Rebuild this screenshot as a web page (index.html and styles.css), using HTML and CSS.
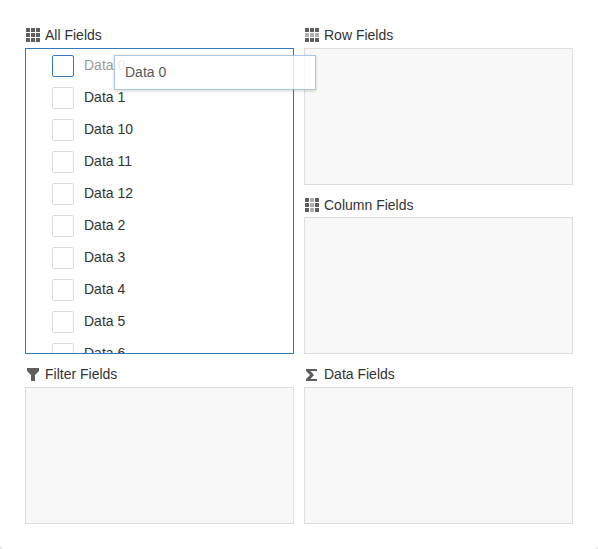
FILE: index.html
```html
<!DOCTYPE html>
<html lang="en">
<head>
<meta charset="utf-8">
<title>Field Chooser</title>
<link rel="stylesheet" href="styles.css">
</head>
<body>
<svg width="0" height="0" class="defs">
  <defs>
    <path id="col-a" d="M1 1h4v4H1zM1 6h4v4H1zM1 11h4v4H1z"/>
    <path id="col-b" d="M6 1h4v4H6zM6 6h4v4H6zM6 11h4v4H6z"/>
    <path id="col-c" d="M11 1h4v4h-4zM11 6h4v4h-4zM11 11h4v4h-4z"/>
  </defs>
</svg>
<main class="chooser">
  <div class="column">
    <section class="area all">
      <h2 class="title"><svg class="icon" viewBox="0 0 16 16"><use href="#col-a"/><use href="#col-b"/><use href="#col-c"/></svg>All Fields</h2>
      <div class="box list focused">
        <div class="item dragging"><span class="check active"></span><span class="label">Data 0</span></div>
        <div class="item"><span class="check"></span><span class="label">Data 1</span></div>
        <div class="item"><span class="check"></span><span class="label">Data 10</span></div>
        <div class="item"><span class="check"></span><span class="label">Data 11</span></div>
        <div class="item"><span class="check"></span><span class="label">Data 12</span></div>
        <div class="item"><span class="check"></span><span class="label">Data 2</span></div>
        <div class="item"><span class="check"></span><span class="label">Data 3</span></div>
        <div class="item"><span class="check"></span><span class="label">Data 4</span></div>
        <div class="item"><span class="check"></span><span class="label">Data 5</span></div>
        <div class="item"><span class="check"></span><span class="label">Data 6</span></div>
      </div>
    </section>
    <section class="area last">
      <h2 class="title"><svg class="icon" viewBox="0 0 16 16"><path d="M2 2h12v3l-4 4v6H6V9L2 5z"/></svg>Filter Fields</h2>
      <div class="box"></div>
    </section>
  </div>
  <div class="column">
    <section class="area">
      <h2 class="title"><svg class="icon" viewBox="0 0 16 16"><path d="M1 1h4v4H1zM6 1h4v4H6zM11 1h4v4h-4zM1 11h4v4H1zM6 11h4v4H6zM11 11h4v4h-4z"/><path class="soft" d="M1 6h4v4H1zM6 6h4v4H6zM11 6h4v4h-4z"/></svg>Row Fields</h2>
      <div class="box"></div>
    </section>
    <section class="area middle">
      <h2 class="title"><svg class="icon" viewBox="0 0 16 16"><use href="#col-a"/><use class="soft" href="#col-b"/><use href="#col-c"/></svg>Column Fields</h2>
      <div class="box"></div>
    </section>
    <section class="area last">
      <h2 class="title"><svg class="icon" viewBox="0 0 16 16"><path d="M2 3h11v2H6.500l3.500 4-3.500 4H13v2H2v-2l4-4-4-4z"/></svg>Data Fields</h2>
      <div class="box"></div>
    </section>
  </div>
</main>
<div class="drag">Data 0</div>
</body>
</html>
```
FILE: styles.css
```css
* {
  box-sizing: border-box;
}

html {
  background: #ddd;
}

body {
  position: relative;
  margin: 0;
  height: 549px;
  overflow: hidden;
  font: 14px/18px "Liberation Sans", Arial, sans-serif;
  color: #333;
  background: #ddd;
}

.defs {
  position: absolute;
}

.chooser {
  display: flex;
  gap: 10px;
  height: 549px;
  padding: 26px 25px 25px;
  background: #fff;
  border-radius: 0 0 4px 4px;
}

.column {
  display: flex;
  flex-direction: column;
  width: 269px;
}

.title {
  display: flex;
  align-items: center;
  gap: 4px;
  height: 18px;
  margin: 0 0 4px;
  font-size: 14px;
  font-weight: normal;
}

.icon {
  width: 16px;
  height: 16px;
  fill: #5e5e5e;
}

.soft {
  fill: #adadad;
}

.box {
  height: 137px;
  background: #f8f8f8;
  border: 1px solid #ddd;
}

.area.middle {
  margin-top: 11px;
}

.area.middle .title {
  margin-bottom: 3px;
}

.area.last {
  margin-top: 11px;
}

.box.list {
  height: 306px;
  padding-top: 1px;
  overflow: hidden;
  background: #fff;
  border-color: #337ab7;
}

.item {
  display: flex;
  align-items: center;
  gap: 10px;
  height: 32px;
  padding-left: 26px;
}

.check {
  width: 22px;
  height: 22px;
  background: #fff;
  border: 1px solid #ddd;
  border-radius: 2px;
}

.check.active {
  border-color: #337ab7;
}

.label {
  position: relative;
  top: -1px;
}

.dragging .label {
  opacity: .5;
}

.drag {
  position: absolute;
  left: 114px;
  top: 55px;
  width: 202px;
  height: 35px;
  padding: 8px 10px;
  font-size: 14px;
  line-height: 17px;
  background: #fff;
  border: 1px solid rgba(51, 122, 183, .5);
  box-shadow: 0 1px 3px rgba(0, 0, 0, .2);
  opacity: .82;
}
```
